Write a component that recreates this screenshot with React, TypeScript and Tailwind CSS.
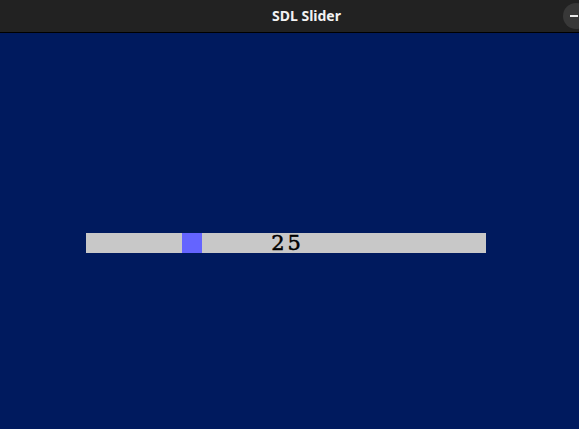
import React from "react";

export default function App() {
  const value = 25;
  return (
    <div className="w-[579px] h-[429px] flex flex-col overflow-hidden bg-[#001a5e]">
      <div className="relative h-[32px] shrink-0 bg-[#222222] border-b border-black box-content flex items-center justify-center pl-[34px]">
        <span
          className="text-[14px] font-bold text-[#f2f2f2] leading-none"
          style={{ fontFamily: '"Noto Sans", "Open Sans", sans-serif' }}
        >
          SDL Slider
        </span>
        <div className="absolute left-[563px] top-[3px] w-[26px] h-[26px] rounded-full bg-[#383838] flex items-center">
          <div className="ml-[7px] w-[8px] h-[2px] bg-[#e8e8e8]" />
        </div>
      </div>
      <div className="flex-1 pt-[200px] pl-[86px]">
        <div className="relative w-[400px] h-[20px] bg-[#c8c8c8] flex items-center justify-center">
          <div className="absolute left-[96px] top-0 w-[20px] h-[20px] bg-[#6464ff]" />
          <span
            className="relative text-[21px] leading-none text-black tracking-[3px] ml-[3px] mt-[1px] [-webkit-text-stroke:0.5px_black]"
            style={{ fontFamily: '"DejaVu Serif", serif' }}
          >
            {value}
          </span>
        </div>
      </div>
    </div>
  );
}
